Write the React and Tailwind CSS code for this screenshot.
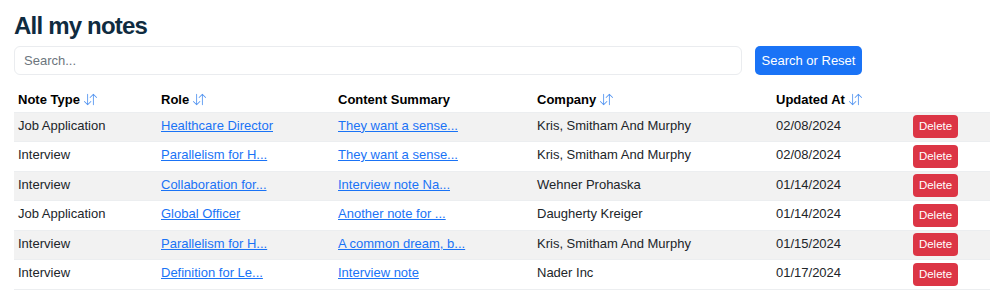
import React from 'react';

const rows = [
  { type: 'Job Application', role: 'Healthcare Director', summary: 'They want a sense...', company: 'Kris, Smitham And Murphy', updated: '02/08/2024' },
  { type: 'Interview', role: 'Parallelism for H...', summary: 'They want a sense...', company: 'Kris, Smitham And Murphy', updated: '02/08/2024' },
  { type: 'Interview', role: 'Collaboration for...', summary: 'Interview note Na...', company: 'Wehner Prohaska', updated: '01/14/2024' },
  { type: 'Job Application', role: 'Global Officer', summary: 'Another note for ...', company: 'Daugherty Kreiger', updated: '01/14/2024' },
  { type: 'Interview', role: 'Parallelism for H...', summary: 'A common dream, b...', company: 'Kris, Smitham And Murphy', updated: '01/15/2024' },
  { type: 'Interview', role: 'Definition for Le...', summary: 'Interview note', company: 'Nader Inc', updated: '01/17/2024' },
];

function SortIcon() {
  return (
    <svg width="13" height="13" viewBox="0 0 16 16" fill="#4a8ff0" className="inline-block ml-[4px] -mt-[2px]">
      <path fillRule="evenodd" d="M11.5 15a.5.5 0 0 0 .5-.5V2.707l3.146 3.147a.5.5 0 0 0 .708-.708l-4-4a.5.5 0 0 0-.708 0l-4 4a.5.5 0 1 0 .708.708L11 2.707V14.5a.5.5 0 0 0 .5.5m-7-14a.5.5 0 0 1 .5.5v11.793l3.146-3.147a.5.5 0 1 1 .708.708l-4 4a.5.5 0 0 1-.708 0l-4-4a.5.5 0 0 1 .708-.708L4 13.293V1.5a.5.5 0 0 1 .5-.5" />
    </svg>
  );
}

export default function App() {
  return (
    <div className="w-[1000px] h-[304px] bg-white px-[14px] text-[#212529]" style={{ fontFamily: '"Liberation Sans", Arial, sans-serif' }}>
      <h1 className="pt-[11px] text-[24px] leading-[30px] font-bold tracking-[-0.8px] text-[#0f2b40]">All my notes</h1>

      <div className="flex items-center mt-[5px]">
        <input
          placeholder="Search..."
          className="w-[728px] h-[29px] border border-[#eaecef] rounded-[6px] px-[9px] text-[13px] placeholder:text-[#6c757d] outline-none"
        />
        <button className="ml-[13px] w-[107px] h-[29px] bg-[#1a73f6] text-white text-[13px] rounded-[5px]">
          Search or Reset
        </button>
      </div>

      <table className="w-[976px] mt-[13px] table-fixed border-collapse text-[13px]">
        <colgroup>
          <col className="w-[143px]" />
          <col className="w-[177px]" />
          <col className="w-[199px]" />
          <col className="w-[239px]" />
          <col className="w-[137px]" />
          <col />
        </colgroup>
        <thead>
          <tr className="h-[24px] border-b border-[#eceef0] font-bold text-black">
            <th className="text-left px-[4px] font-bold">Note Type<SortIcon /></th>
            <th className="text-left px-[4px] font-bold">Role<SortIcon /></th>
            <th className="text-left px-[4px] font-bold">Content Summary</th>
            <th className="text-left px-[4px] font-bold">Company<SortIcon /></th>
            <th className="text-left px-[4px] font-bold">Updated At<SortIcon /></th>
            <th />
          </tr>
        </thead>
        <tbody>
          {rows.map((r, i) => (
            <tr key={i} className={`h-[29.5px] border-b border-[#eceef0] ${i % 2 === 0 ? 'bg-[#f2f2f2]' : 'bg-white'}`}>
              <td className="px-[4px] align-top pt-[3px]">{r.type}</td>
              <td className="px-[4px] align-top pt-[3px]"><a href="#" className="text-[#1a73f6] underline">{r.role}</a></td>
              <td className="px-[4px] align-top pt-[3px]"><a href="#" className="text-[#1a73f6] underline">{r.summary}</a></td>
              <td className="px-[4px] align-top pt-[3px]">{r.company}</td>
              <td className="px-[4px] align-top pt-[3px]">{r.updated}</td>
              <td className="px-[4px] align-middle">
                <button className="w-[45px] h-[23px] bg-[#dc3545] text-white text-[11.5px] rounded-[4px]">Delete</button>
              </td>
            </tr>
          ))}
        </tbody>
      </table>
    </div>
  );
}
